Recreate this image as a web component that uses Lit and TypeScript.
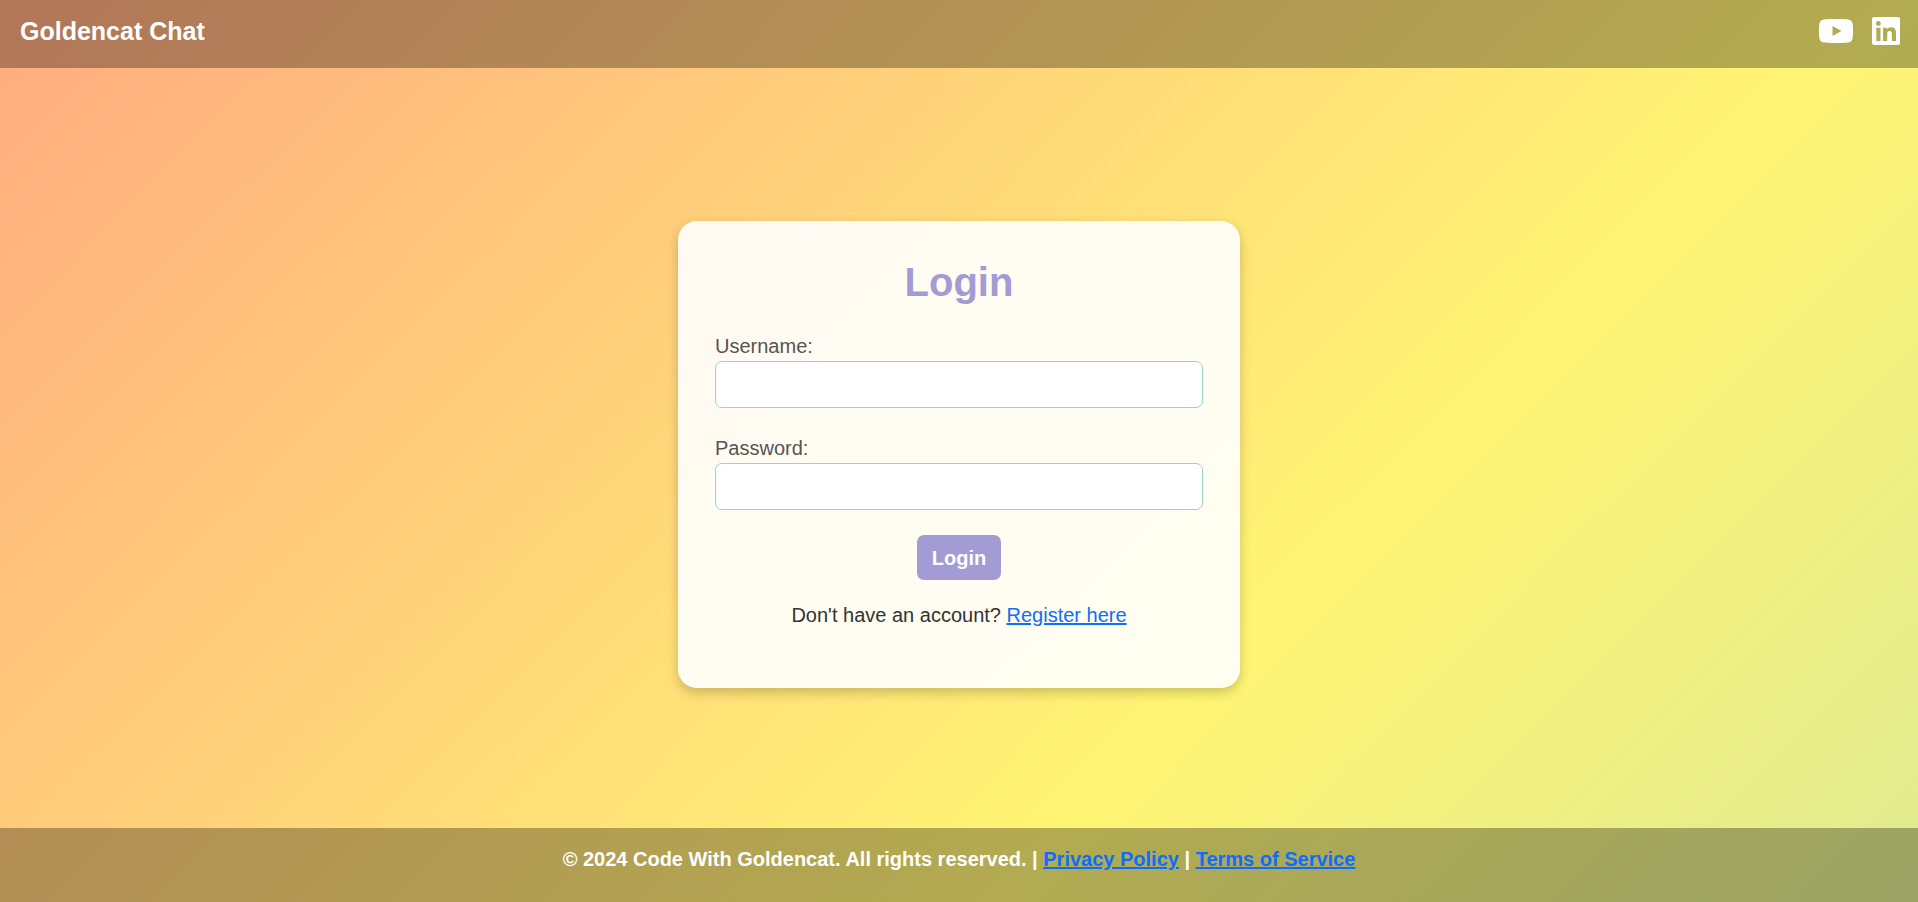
import { LitElement, html, css } from "lit";
import { customElement } from "lit/decorators.js";

@customElement("app-root")
export class AppRoot extends LitElement {
  static styles = css`
    :host {
      display: flex;
      flex-direction: column;
      min-height: 100vh;
      box-sizing: border-box;
      background: linear-gradient(135deg, #ffaa80 0%, #fff574 67%, #dfea91 100%);
      color: #333;
      font: 20px/30px Arial, "Liberation Sans", sans-serif;
    }
    *, *::before, *::after { box-sizing: border-box; }
    a { color: #0d6efd; text-decoration: underline; }
    .bar { background: rgba(0, 0, 0, 0.3); color: #fff; font-weight: bold; }
    .header {
      display: flex;
      align-items: center;
      justify-content: space-between;
      padding: 13px 18px 19px 20px;
    }
    .brand { font-size: 25px; line-height: 36px; }
    .social { display: flex; gap: 18px; }
    .social a { display: block; color: #fff; line-height: 0; }
    .social svg { display: block; height: 32px; width: auto; fill: currentColor; }
    .main {
      flex: 1;
      display: flex;
      align-items: center;
      justify-content: center;
      padding: 12px 16px 0;
    }
    .card {
      width: 100%;
      max-width: 562px;
      padding: 38px 37px;
      border-radius: 19px;
      background: rgba(255, 255, 255, 0.9);
      box-shadow: 0 5px 12px rgba(0, 0, 0, 0.2);
      text-align: center;
    }
    .title {
      margin: 0 0 26px;
      color: #a29bd4;
      font-size: 40px;
      line-height: 46px;
    }
    .field { margin-bottom: 25px; text-align: left; }
    .label { display: block; color: #555; }
    .input {
      display: block;
      width: 100%;
      height: 47px;
      padding: 8px 12px;
      border: 1px solid #98d5c2;
      border-radius: 7px;
      background: #fff;
      color: #333;
      font: inherit;
    }
    .submit {
      padding: 8px 15px 7px;
      border: 0;
      border-radius: 7px;
      background: #a29bd4;
      color: #fff;
      font: inherit;
      font-weight: bold;
      display: block;
      margin: 0 auto 20px;
    }
    .hint { margin: 0 0 20px; }
    .footer { padding: 16px 16px 28px; text-align: center; }
    .footer p { margin: 0; }
  `;

  render() {
    return html`
      <header class="bar header">
        <div class="brand">Goldencat Chat</div>
        <nav class="social">
          <a href="#youtube" aria-label="YouTube">
            <svg viewBox="0 0 576 512" aria-hidden="true"><path d="M549.655 124.083c-6.281-23.65-24.787-42.276-48.284-48.597C458.781 64 288 64 288 64S117.22 64 74.629 75.486c-23.497 6.322-42.003 24.947-48.284 48.597-11.412 42.867-11.412 132.305-11.412 132.305s0 89.438 11.412 132.305c6.281 23.65 24.787 41.5 48.284 47.821C117.22 448 288 448 288 448s170.78 0 213.371-11.486c23.497-6.321 42.003-24.171 48.284-47.821 11.412-42.867 11.412-132.305 11.412-132.305s0-89.438-11.412-132.305zm-317.51 213.508V175.185l142.739 81.205-142.739 81.201z"/></svg>
          </a>
          <a href="#linkedin" aria-label="LinkedIn">
            <svg viewBox="0 0 448 512" aria-hidden="true"><path d="M416 32H31.9C14.3 32 0 46.5 0 64.3v383.4C0 465.5 14.3 480 31.9 480H416c17.6 0 32-14.5 32-32.3V64.3c0-17.8-14.4-32.3-32-32.3zM135.4 416H69V202.2h66.5V416zm-33.2-243c-21.3 0-38.5-17.3-38.5-38.5S80.9 96 102.2 96c21.2 0 38.5 17.3 38.5 38.5 0 21.3-17.2 38.5-38.5 38.5zm282.1 243h-66.4V312c0-24.8-.5-56.7-34.5-56.7-34.6 0-39.9 27-39.9 54.9V416h-66.4V202.2h63.7v29.2h.9c8.9-16.8 30.6-34.5 62.9-34.5 67.2 0 79.7 44.3 79.7 101.9V416z"/></svg>
          </a>
        </nav>
      </header>
      <main class="main">
        <form class="card">
          <h1 class="title">Login</h1>
          <div class="field">
            <label class="label" for="username">Username:</label>
            <input class="input" id="username" name="username" type="text" autocomplete="username" />
          </div>
          <div class="field">
            <label class="label" for="password">Password:</label>
            <input class="input" id="password" name="password" type="password" autocomplete="current-password" />
          </div>
          <button class="submit" type="submit">Login</button>
          <p class="hint">Don't have an account? <a href="#register">Register here</a></p>
        </form>
      </main>
      <footer class="bar footer">
        <p>© 2024 Code With Goldencat. All rights reserved. | <a href="#privacy">Privacy Policy</a> | <a href="#terms">Terms of Service</a></p>
      </footer>
    `;
  }
}
